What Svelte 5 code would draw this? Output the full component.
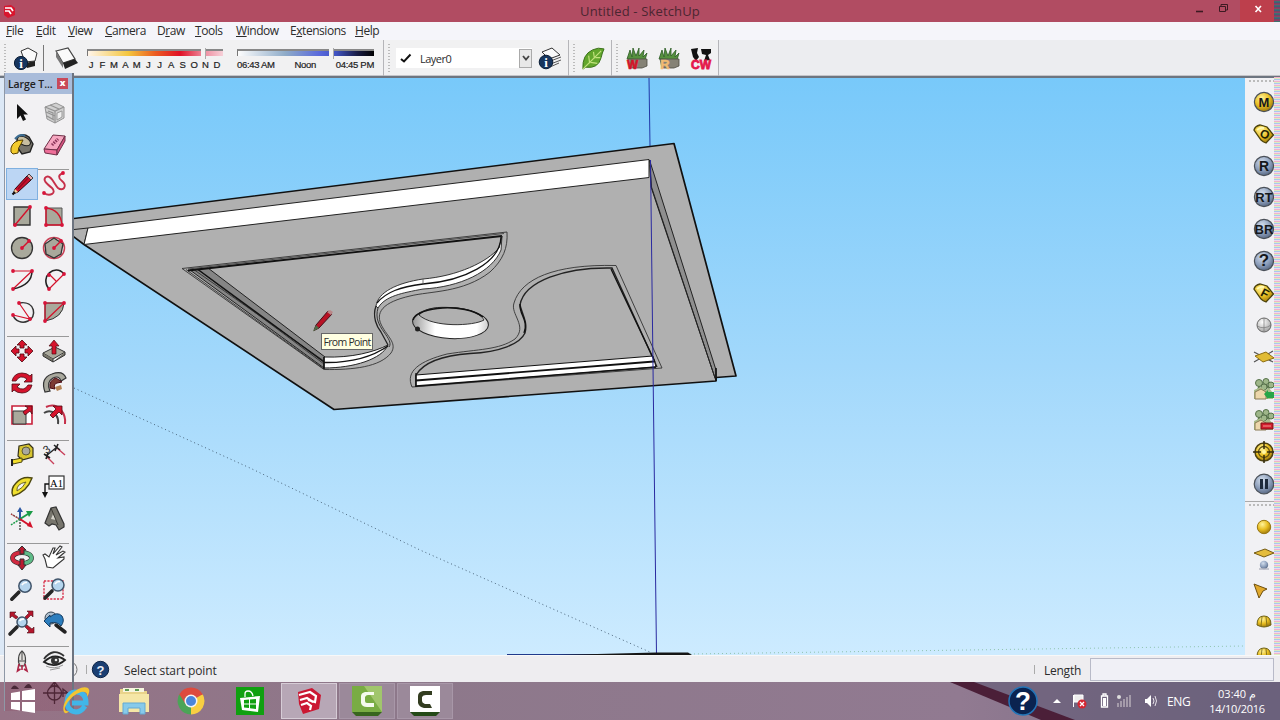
<script>
    const menus = ['File', 'Edit', 'View', 'Camera', 'Draw', 'Tools', 'Window', 'Extensions', 'Help'];
    const accel = { Draw: 1, Extensions: 1 };
    const months = 'JFMAMJJASOND'.split('');

    const toolGroups = [
        ['select', 'component', 'paint', 'eraser'],
        ['pencil', 'freehand', 'rect', 'rotrect', 'circle', 'polygon', 'arc', 'arc2', 'arc3', 'pie'],
        ['move', 'pushpull', 'rotate', 'follow', 'scale', 'offset'],
        ['tape', 'dimension', 'protractor', 'label', 'axes', 'text3d'],
        ['orbit', 'pan', 'zoom', 'zoomwin', 'extents', 'previous'],
        ['position', 'look']
    ];

    const renderTools = ['m', 'tagO', 'r', 'rt', 'br', 'help', 'tagF', 'sphere', 'plane', 'proxyIn', 'proxyOut', 'target', 'pause'];
    const lightTools = ['omni', 'rectLight', 'spot', 'dome', 'dome'];

    const red = '#d3122b';
    const dot = (x, y) => `<circle cx="${x}" cy="${y}" r="1.9" fill="#d8143a"/>`;
    const ball = (fill, label, size = 13) =>
        `<circle cx="11" cy="11" r="9.6" fill="url(#${fill})" stroke="#4a5058" stroke-width="1.2"/>
         <text x="11" y="15.6" font-size="${size}" text-anchor="middle" font-weight="bold" fill="#15181c" font-family="Liberation Sans">${label}</text>`;
    const tag = (label) =>
        `<path d="M1 7Q2 3 7 2L14 4L20.500 12L13 20Q10 19 8 17Z" fill="url(#gold)" stroke="#4c430c" stroke-width="1.3"/>
         <path d="M4 7Q7 4 11 5" stroke="#fff8b0" stroke-width="2" fill="none"/>
         <text x="12" y="15.5" font-size="12" text-anchor="middle" font-weight="bold" fill="#241f05" transform="rotate(28 12 11)" font-family="Liberation Sans">${label}</text>`;
    const trees = `<path d="M5 12L7 6M12 9L14 3M16 11L12 5" stroke="#627b50" stroke-width="2"/>
        <g fill="#9fb78a" stroke="#56724a"><circle cx="6" cy="5" r="3.5"/><circle cx="13" cy="3.5" r="3"/><circle cx="18" cy="7" r="3"/><circle cx="11" cy="9" r="3"/></g>
        <path d="M1 12V21H20V15L16 10L12 12L8 9Z" fill="#a9bd8c"/>
        <path d="M2 21V14L8 11L13 14V21Z" fill="#ecd7ab" stroke="#8a7a55"/>`;
    const lens = (x, y, r) =>
        `<path d="M${x - r} ${y + r}L${x - r - 7} ${y + r + 7}" stroke="#262626" stroke-width="3.6" stroke-linecap="round"/>
         <circle cx="${x}" cy="${y}" r="${r}" fill="#b5d5ee" stroke="#40546a" stroke-width="1.5"/>
         <path d="M${x - r / 2} ${y - 1}Q${x - 1} ${y - r / 1.5} ${x + 2} ${y - r / 1.8}" stroke="#fff" stroke-width="1.6" fill="none"/>`;
    const grass = `<path d="M2 12L5 3L7 10L8 1L11 9L14 1L14 9L19 3L18 10L22 6L20 13Z" fill="#56913e" stroke="#2b5a23" stroke-width=".8"/>
        <path d="M3 12H22V19L17 21H5Z" fill="#858276" stroke="#4d4b42" stroke-width=".8"/>`;

    const icons = {
        select: '<path d="M8 4V19L11.5 15.5L14 21L17 19.5L14.5 14.5H19Z" fill="#111"/>',
        component: '<path d="M4 7L15 3L23 7V18L14 23L6 19Z" fill="#d0d0d0" stroke="#949494"/><path d="M4 7L14 11L23 7M14 11V23M7 11L12 13V20M9 5L18 9M5 12L14 16M6 16L13 20" fill="none" stroke="#939393" stroke-width="1.2"/><path d="M16 13L21 11V17L16 20Z" fill="#eee" stroke="#999"/>',
        paint: '<path d="M8 6Q13 0 20 5L24 12L21 20L13 22L8 15Z" fill="#77746b" stroke="#222" stroke-width="1.4"/><ellipse cx="15" cy="9" rx="7" ry="4" fill="#c8bea0" stroke="#222" transform="rotate(28 15 9)"/><path d="M2 16Q4 8 14 8L12 12Q9 15 9 21L4 22Q1 21 2 16Z" fill="#f2ca2c" stroke="#574100"/><path d="M6 7Q11 1 16 4" fill="none" stroke="#3d6d92" stroke-width="2"/>',
        eraser: '<path d="M12 3L24 4L16 18L3 17Z" fill="#f6a7c0" stroke="#6f3148"/><path d="M3 17L16 18V23L4 21Z" fill="#ee6e99" stroke="#6f3148"/><path d="M16 18L24 4V9L16 23Z" fill="#d4507e" stroke="#6f3148"/><path d="M11 13L17 7" stroke="#8b3559" stroke-width="3" stroke-dasharray="1.5 1"/>',
        pencil: '<path d="M4 23L6 18L18 5L22 9L9 21Z" fill="#c8102e" stroke="#35070f"/><path d="M4 23L6 18L9 21Z" fill="#f3d39a"/><path d="M3.500 23.500L6 21" stroke="#111" stroke-width="2.2"/><path d="M18 5L20 3L24 7L22 9Z" fill="#ecaaa7" stroke="#444"/><path d="M9 18L19 7" stroke="#94091f" stroke-width="1.2"/>',
        freehand: `<path d="M3 22C9 26 16 22 11 17C6 13 1 9 5 6C10 3 13 13 17 17C22 21 27 15 21 10C17 7 17 4 22 2" fill="none" stroke="#c6304a" stroke-width="1.9"/>${dot(3, 22)}${dot(22, 2)}`,
        rect: `<path d="M5 4H21V22H5Z" fill="#a9a99c" stroke="#333" stroke-width="1.4"/><path d="M6 22L21 4" stroke="${red}" stroke-width="1.4"/>${dot(6, 22)}${dot(21, 4)}`,
        rotrect: `<path d="M5 5H21V22H5Z" fill="#a9a99c" stroke="#555"/><path d="M5 22V5M5 22H21M5 5C14 6 20 12 21 22" stroke="${red}" stroke-width="1.4" fill="none"/>${dot(5, 22)}${dot(5, 5)}${dot(21, 22)}`,
        circle: `<circle cx="13" cy="13" r="10.5" fill="#a9a99c" stroke="#333" stroke-width="1.3"/><path d="M13 13L20 6" stroke="${red}" stroke-width="1.5"/>${dot(13, 13)}${dot(20, 6)}`,
        polygon: `<circle cx="13" cy="13" r="10.5" fill="#eee" stroke="#c94055" stroke-width="1.5"/><path d="M13 3L22 9L20 19L13 23L5 19L4 9Z" fill="#a9a99c" stroke="#333" stroke-width="1.3"/><path d="M13 13L20 6" stroke="${red}" stroke-width="1.5"/>${dot(13, 13)}${dot(20, 6)}`,
        arc: `<path d="M4 4H23L4 22" fill="none" stroke="${red}" stroke-width="1.2"/><path d="M23 4Q23 18 4 22" fill="none" stroke="#222" stroke-width="1.5"/>${dot(4, 4)}${dot(23, 4)}${dot(4, 22)}`,
        arc2: `<path d="M8 22C-2 10 14-4 23 7" fill="none" stroke="#222" stroke-width="1.6"/><path d="M8 22L23 7M8 7L15 14" fill="none" stroke="${red}" stroke-width="1.2"/>${dot(8, 22)}${dot(23, 7)}${dot(8, 8)}`,
        arc3: `<path d="M10 4C27 1 28 19 19 22C13 25 6 22 4 16" fill="none" stroke="#333" stroke-width="1.5"/><path d="M10 4L21 20L4 16" fill="none" stroke="${red}" stroke-width="1.2"/>${dot(10, 4)}${dot(21, 20)}${dot(4, 16)}`,
        pie: `<path d="M4 4H23Q22 19 4 22Z" fill="#a9a99c" stroke="#333"/><path d="M4 4H23L4 22Z" fill="none" stroke="${red}" stroke-width="1.2"/>${dot(4, 4)}${dot(23, 4)}${dot(4, 22)}`,
        move: '<path d="M13 2L18 7H15V10H11V7H8ZM13 24L18 19H15V16H11V19H8ZM2 13L7 8V11H10V15H7V18ZM24 13L19 8V11H16V15H19V18Z" fill="#d5132c" stroke="#4c0b13" stroke-width=".8"/>',
        pushpull: '<path d="M2 15L14 9L24 14L12 21Z" fill="#aaa99c" stroke="#333"/><path d="M2 15V18L12 24V21M12 24L24 17V14" fill="#777568" stroke="#333"/><path d="M13 2L18 8H15V16H11V8H8Z" fill="#d5132c" stroke="#4c0b13" stroke-width=".7"/>',
        rotate: '<path d="M3 11Q5 3 13 3Q18 3 21 6L23 4V12H15L18 9Q11 4 7 11Z" fill="#d5132c" stroke="#4c0b13" stroke-width=".8"/><path d="M23 15Q21 23 13 23Q8 23 5 20L3 22V14H11L8 17Q15 22 19 15Z" fill="#d5132c" stroke="#4c0b13" stroke-width=".8"/>',
        follow: '<path d="M4 22Q-1 8 11 4Q22 0 25 8L20 11Q18 5 12 8Q5 12 9 21Z" fill="#aaa99e" stroke="#333" stroke-width="1.2"/><path d="M9 18Q8 10 15 8L21 12L16 13Q12 14 14 19Z" fill="#7c3a34" stroke="#4c0b13"/><path d="M14 17L20 15L21 19L16 21Z" fill="#b58255"/>',
        scale: '<path d="M3 4H23V22H3Z" fill="#fff" stroke="#c8203a" stroke-width="1.6"/><path d="M4 9H17V22H4Z" fill="#aaa99c" stroke="#333"/><path d="M14 10L19 6L16 4H23V12L21 9L16 13Z" fill="#d5132c" stroke="#4c0b13" stroke-width=".8"/>',
        offset: '<path d="M5 5Q14 1 20 8Q25 14 24 22" fill="none" stroke="#c6304a" stroke-width="2"/><path d="M3 11Q9 7 14 12Q18 16 17 22" fill="none" stroke="#444" stroke-width="2"/><path d="M9 13L15 7L12 4H21V13L18 10L12 16Z" fill="#d5132c" stroke="#4c0b13" stroke-width=".8"/>',
        tape: '<path d="M10 4L20 2L24 6V15L13 18L9 14Z" fill="#d7c431" stroke="#33301a" stroke-width="1.2"/><circle cx="17" cy="9" r="4" fill="#a8a8a0" stroke="#605d32"/><path d="M3 18L13 16V20L4 22Z" fill="#f3df2d" stroke="#4e4811"/><path d="M3 17V24" stroke="#222" stroke-width="2"/>',
        dimension: '<path d="M5 14L16 5" stroke="#222" stroke-width="1.3"/><path d="M6 15L13 22M16 6L24 13" stroke="#c8405a" stroke-width="1.4"/><path d="M3 12L9 16M7 11L5 17M13 3L19 8M17 2L14 9" stroke="#222" stroke-width="1.6"/><text x="3" y="11" font-size="11" fill="#222" transform="rotate(-35 6 8)" font-family="Liberation Sans">3</text>',
        protractor: '<path d="M4 22Q1 15 7 9Q13 2 23 4Q18 18 4 22Z" fill="#efdf2e" stroke="#4c4710" stroke-width="1.4"/><path d="M8 17Q7 10 17 8Q14 14 8 17Z" fill="#f3f2ee" stroke="#6d681e"/>',
        label: '<rect x="8" y="2" width="15" height="13" fill="#fff" stroke="#333" stroke-width="1.2"/><text x="15.5" y="12.5" text-anchor="middle" font-size="10.500" font-family="Liberation Serif">A1</text><path d="M8 10H4V19" fill="none" stroke="#111" stroke-width="1.4"/><path d="M1 18H7L4 24Z" fill="#111"/>',
        axes: '<path d="M11 13V24M11 13L2 8" stroke="#555" stroke-width="1.5" stroke-dasharray="2 1"/><path d="M11 13L2 19" stroke="#1b9b47" stroke-width="1.500" stroke-dasharray="2 1"/><path d="M11 13V5" stroke="#2a57a3" stroke-width="2"/><path d="M8 6L11 1L14 6Z" fill="#2a57a3"/><path d="M11 13L19 8" stroke="#1b9b47" stroke-width="2"/><path d="M17 5L24 5L20 11Z" fill="#1b9b47"/><path d="M11 13L20 19" stroke="#d3122b" stroke-width="2"/><path d="M18 20L24 22L21 15Z" fill="#d3122b"/><path d="M2 8L10 13" stroke="#c33" stroke-dasharray="2 1"/>',
        text3d: '<path d="M4 17L10 2L15 1L23 18V21L18 24L15 19L11 18L8 20Z" fill="#77756d" stroke="#333" stroke-width="1.2"/><path d="M12 8L15 14L10 13Z" fill="#d4d2ca"/><path d="M10 2L17 19" stroke="#3b3a35"/>',
        orbit: '<ellipse cx="13" cy="13" rx="9.500" ry="5.500" fill="none" stroke="#333" stroke-width="4.800"/><path d="M13 7.500Q3.500 8 3.500 13Q4 18 13 18.500" fill="none" stroke="#d12a40" stroke-width="3.600"/><path d="M13 7.500Q22.500 8 22.500 13Q22 18 13 18.500" fill="none" stroke="#5fbb88" stroke-width="3.600"/><path d="M9 5L13 1L17 5H15V9H11V5ZM11 14H15V20H17L13 25L9 20H11Z" fill="#b91b30" stroke="#333"/>',
        pan: '<path d="M6 22L4 14L2 10L4 9L8 12L12 3L14 3L12 9L19 1L21 2L15 10L22 6L24 7L17 13L23 12V14L18 18L12 23Z" fill="#fff" stroke="#333" stroke-width="1.1"/>',
        zoom: lens(16, 9, 6.2),
        zoomwin: `<path d="M3 4H22V22H3Z" fill="none" stroke="#d8304a" stroke-width="1.4" stroke-dasharray="2.2 1.2"/>${lens(17, 8, 6)}`,
        extents: `${lens(13, 13, 5)}<path d="M1 3H7L5 5L9 8L7 10L3 7L1 9ZM24 2V8L22 6L18 10L16 8L20 4L18 2ZM25 24H18L20 22L16 18L18 16L23 20L25 18Z" fill="#b5162c" stroke="#4b0d17" stroke-width=".6"/>`,
        previous: '<circle cx="10" cy="9" r="6" fill="#aebfce" stroke="#35434f"/><path d="M15 16L24 23" stroke="#222" stroke-width="3.5" stroke-linecap="round"/><path d="M3 12L9 6V8Q16 2 21 7Q24 12 20 17Q16 12 9 14V18Z" fill="#2c7dbd" stroke="#163d63"/>',
        position: '<path d="M9.500 14Q9 6 13 3Q17 6 16.500 14L15 18H11Z" fill="#e4e2df" stroke="#444" stroke-width="1.2"/><path d="M10 13H16M13 4V12" stroke="#444"/><path d="M10 16L8.500 23L11.500 21M16 16L18 23L15 21M13 17V22" fill="none" stroke="#ae2546" stroke-width="1.6"/>',
        look: '<path d="M3 11Q12-1 23 8" fill="none" stroke="#333" stroke-width="1.8"/><path d="M3 14Q13 4 24 12Q14 21 3 14Z" fill="#eee" stroke="#222" stroke-width="1.8"/><circle cx="14" cy="12.500" r="4" fill="#333"/><circle cx="15" cy="12" r="1.3" fill="#eee"/><path d="M5 18Q13 22 22 17M9 22L19 20" stroke="#999" fill="none"/>',

        m: ball('gold', 'M'),
        tagO: tag('O'),
        r: ball('steel', 'R', 14),
        rt: ball('steel', 'RT'),
        br: ball('steel', 'BR'),
        help: ball('steel', '?', 17),
        tagF: tag('F'),
        sphere: '<circle cx="11" cy="11" r="7" fill="url(#silver)" stroke="#666"/><path d="M4 12Q11 16 18 11M11 4V17" stroke="#777" stroke-width=".7" fill="none"/>',
        plane: '<path d="M1 6L20 16M20 5L1 16" stroke="#555" stroke-width="1.2"/><path d="M2 10L13 6L21 12L10 16Z" fill="#e1bb35" stroke="#8c6d13"/>',
        proxyIn: `${trees}<path d="M11 16L15 12V14H21V20H15V21Z" fill="#26a548"/>`,
        proxyOut: `${trees}<path d="M8 14H20V20H8Z" fill="#d21e2d" stroke="#7e1119"/><path d="M10 17H18" stroke="#f29b94"/>`,
        target: '<circle cx="11" cy="11" r="9" fill="url(#gold)" stroke="#4f4210" stroke-width="1.5"/><circle cx="11" cy="11" r="5.5" fill="none" stroke="#5e4d10" stroke-width="1.3"/><path d="M11 0V8M11 14V22M0 11H8M14 11H22" stroke="#332b0c" stroke-width="1.5"/><circle cx="11" cy="11" r="2" fill="#fff7a5"/>',
        pause: '<circle cx="11" cy="11" r="9.8" fill="url(#steel)" stroke="#4a5058" stroke-width="1.2"/><path d="M8.5 6V16M13.5 6V16" stroke="#1d2a3c" stroke-width="3"/>',
        omni: '<circle cx="11" cy="11" r="6.7" fill="url(#gold)" stroke="#987713"/>',
        rectLight: '<path d="M1 5L12 1L21 5L11 9Z" fill="#e4bc3c" stroke="#755b13"/><circle cx="11" cy="17" r="4.2" fill="url(#steel)"/><path d="M6 21H16" stroke="#b7b9c5" stroke-width="1.5"/>',
        spot: '<path d="M1 4L14 9L10 11L6 18Z" fill="#e1a92c" stroke="#6e5010"/>',
        dome: '<path d="M4 14Q4 5 11 5Q18 5 18 14Q11 18 4 14Z" fill="url(#gold)" stroke="#6e6115"/><path d="M9 6L8 15M13 6L14 15" stroke="#6e6115" stroke-width=".8"/>',

        shadowInfo: '<path d="M8 4L15 1L24 6L22 14L12 15Z" fill="#fafafa" stroke="#333"/><path d="M12 16L22 14V19L14 21Z" fill="#222"/><circle cx="8" cy="16" r="6.6" fill="#16355e" stroke="#0b1d35"/><text x="8" y="20.5" text-anchor="middle" font-family="Liberation Serif" font-weight="bold" font-size="13" fill="#fff">i</text>',
        shadow: '<path d="M2 4L14 1L21 12L9 16Z" fill="#fafafa" stroke="#444" stroke-width="1.2"/><path d="M2 4L9 16V21L2 10Z" fill="#777"/><path d="M9 16L21 12L24 16L11 22Z" fill="#222"/>',
        layers: '<path d="M4 5L14 1L22 8L11 12Z" fill="#fafafa" stroke="#333"/><path d="M10 15L23 10M10 18L23 13M12 20L21 16" stroke="#555"/><circle cx="8" cy="15" r="6.8" fill="#16355e" stroke="#0b1d35"/><text x="8" y="19.5" text-anchor="middle" font-family="Liberation Serif" font-weight="bold" font-size="13" fill="#fff">i</text>',
        leaf: '<path d="M2 23Q1 8 12 3Q18 0 24 2Q22 6 21 11Q18 23 5 21Z" fill="#62a62c" stroke="#386f18"/><path d="M2 23Q11 14 21 4M9 17L8 9M14 12L13 5M10 16L17 17M15 11L20 11" fill="none" stroke="#c2e27d" stroke-width="1.2"/>',
        grassW: `${grass}<text x="7.500" y="22" text-anchor="middle" font-size="13" textLength="11" lengthAdjust="spacingAndGlyphs" font-weight="bold" fill="#d41429" stroke="#d41429" stroke-width=".7" font-family="Liberation Sans">W</text>`,
        grassR: `${grass}<text x="8" y="22" text-anchor="middle" font-size="13" font-weight="bold" fill="#f1bb72" stroke="#f1bb72" stroke-width=".5" font-family="Liberation Sans">R</text>`,
        cw: '<path d="M2 2L9 1L8 6L10 10L7 14L4 10ZM12 2H22V6L19 8L21 13L15 14L17 8L13 7Z" fill="#111"/><text x="12" y="22" text-anchor="middle" font-size="12" font-weight="bold" fill="#e4184b" stroke="#e4184b" stroke-width=".8" font-family="Liberation Sans">CW</text>'
    };
</script>

{#snippet icon(name, size, box)}
    <svg class="icon" width={size} height={size} viewBox="0 0 {box} {box}">{@html icons[name]}</svg>
{/snippet}

<svg class="defs" width="0" height="0">
    <defs>
        <radialGradient id="gold" cx=".38" cy=".3" r=".8"><stop stop-color="#fff39a" /><stop offset=".5" stop-color="#e8bd20" /><stop offset="1" stop-color="#8c6a0c" /></radialGradient>
        <radialGradient id="steel" cx=".4" cy=".3" r=".8"><stop stop-color="#d3deed" /><stop offset=".55" stop-color="#8a9cb9" /><stop offset="1" stop-color="#4a5973" /></radialGradient>
        <radialGradient id="silver" cx=".4" cy=".3" r=".8"><stop stop-color="#fff" /><stop offset="1" stop-color="#999" /></radialGradient>
    </defs>
</svg>

<div class="window">
    <header class="titlebar">
        <svg class="app-icon" width="13" height="13" viewBox="0 0 13 13">
            <path d="M1 1L8 0L12 3V10L5 13L1 10Z" fill="#d9152e" />
            <path d="M2 3H8L10 6M2 6H6L8 9" fill="none" stroke="#fff" stroke-width="1.7" />
        </svg>
        <span class="title">Untitled - SketchUp</span>
        <svg class="controls" width="81" height="22" viewBox="0 0 81 22">
            <path d="M-3 11.5H4" stroke="#3c1a22" stroke-width="1.6" />
            <path d="M20.5 6.5H26.5V11.5H20.5ZM22 6V4.500H28.5V10H27" fill="none" stroke="#3c1a22" />
            <rect x="41" width="40" height="22" fill="#bd3f4c" />
            <path d="M56.500 6L62 12M62 6L56.500 12" stroke="#fff" stroke-width="1.6" />
        </svg>
    </header>

    <nav class="menubar">
        {#each menus as item}
            {@const i = accel[item] ?? 0}
            <span>{item.slice(0, i)}<u>{item[i]}</u>{item.slice(i + 1)}</span>
        {/each}
    </nav>

    <div class="toolbar">
        <i class="grip"></i>
        <div class="slot info">{@render icon('shadowInfo', 24, 24)}</div>
        <i class="divider short"></i>
        <div class="slot shadow">{@render icon('shadow', 24, 24)}</div>
        <div class="slider date">
            <div class="track"><b></b></div>
            <div class="months">{#each months as m}<span>{m}</span>{/each}</div>
        </div>
        <div class="slider time">
            <div class="track"><b></b></div>
            <div class="hours"><span>06:43 AM</span><span>Noon</span><span>04:45 PM</span></div>
        </div>
        <i class="divider"></i>
        <i class="grip"></i>
        <div class="combo">
            <svg width="12" height="10" viewBox="0 0 12 10"><path d="M1 6L4 8.5L10.500 1.500" fill="none" stroke="#111" stroke-width="2" /></svg>
            <span>Layer0</span>
            <button aria-label="Layers"><svg width="8" height="6" viewBox="0 0 8 6"><path d="M1 1L4 4.500L7 1" fill="none" stroke="#444" stroke-width="1.800" /></svg></button>
        </div>
        <div class="slot layer">{@render icon('layers', 24, 24)}</div>
        <i class="divider"></i>
        <i class="grip"></i>
        <div class="slot leaf">{@render icon('leaf', 24, 25)}</div>
        <i class="divider"></i>
        <i class="grip"></i>
        <div class="plants">
            {@render icon('grassW', 24, 24)}
            {@render icon('grassR', 24, 24)}
            {@render icon('cw', 24, 24)}
        </div>
        <i class="divider"></i>
    </div>

    <main>
        <div class="gutter"></div>
        <svg class="scene" width="1171" height="577" viewBox="74 78 1171 577">
            <defs>
                <linearGradient id="sky" x2="0" y2="1"><stop stop-color="#78c9fa" /><stop offset=".5" stop-color="#a2d8fb" /><stop offset="1" stop-color="#cdebff" /></linearGradient>
                <linearGradient id="rim"><stop stop-color="#999" /><stop offset=".3" stop-color="#fff" /><stop offset=".85" stop-color="#fff" /><stop offset="1" stop-color="#ccc" /></linearGradient>
            </defs>
            <rect x="74" y="78" width="1171" height="577" fill="url(#sky)" />
            <path d="M74 388L250 468L420 550L652 653" fill="none" stroke="#3d566c" stroke-width=".9" stroke-dasharray="1 3" />
            <path d="M690 654L1245 646" stroke="#8fc3ae" stroke-dasharray="1 3" />
            <path d="M649 78L650 146" stroke="#2038a8" />

            <!-- slab -->
            <path d="M70 219L674 143.500L736 376L716 377.500V381L334 409.500L84 244.500L70 234Z" fill="#b0b0b0" stroke="#101010" stroke-width="1.700" stroke-linejoin="round" />
            <path d="M74 229.500L88 228L84 244.500" fill="none" stroke="#222" />
            <path d="M88 228L649 159.500V177.500L84 244.500Z" fill="#fff" stroke="#222" />
            <path d="M649.500 160L716 370V381L651.500 187Z" fill="#8e8e8e" stroke="#222" />
            <path d="M650 165L651 187L715 378" fill="none" stroke="#222" />
            <path d="M716 368V381" stroke="#111" stroke-width="1.600" />

            <!-- left recess -->
            <path d="M182 268.500L507 232C508 248 503 260 490 272C463 293 430 291 410 296C384 302 373 312 383 328C389 338 397 344 391 353C380 367 353 370 324 369.500Z" fill="#b0b0b0" stroke="#333" stroke-width=".9" />
            <path d="M190 270L208 268L325 357L324 368Z" fill="#858585" stroke="#222" />
            <path d="M186 269.500L324 369M193 269L324 361M197 269L324 364" fill="none" stroke="#333" stroke-width=".9" />
            <path d="M198 269.500L324 362" stroke="#111" stroke-width="1.300" />
            <path d="M188 270.500L502 236" stroke="#111" stroke-width="1.800" />
            <path d="M188 269L504 233.500" stroke="#333" stroke-width=".8" />
            <path d="M499 248C487 262 458 276 423 279C397 283 378 292 376 306L378 308C385 296 402 293 423 289C460 287 492 272 501 250L502 236Z" fill="#fff" stroke="#222" stroke-width=".9" />
            <path d="M501 237C500 263 464 281 423 284C400 287 386 292 377 303" fill="none" stroke="#111" stroke-width="1.300" />
            <path d="M423 279V284" stroke="#555" stroke-width=".8" />
            <path d="M376 306C372 317 377 327 381 332L388 345" fill="none" stroke="#222" stroke-width="1.300" />
            <path d="M378 308C375 318 379 325 384 332C388 338 392 343 389 347" fill="none" stroke="#333" />
            <path d="M324 357C352 358 374 352 388 345C382 359 354 368 324 368Z" fill="#fff" stroke="#222" />
            <path d="M324 362.500C350 363 372 357 388 346M324 357V369" fill="none" stroke="#111" stroke-width="1.500" />

            <!-- right recess -->
            <path d="M412 387C405 371 420 361 447 354C479 349 499 350 515 339C528 326 510 314 514 303C521 279 554 264 616 265.500L662 368Z" fill="#b0b0b0" stroke="#333" stroke-width=".9" />
            <path d="M416 387V375C425 360 449 355 470 353.500C500 352 520 344 525 333C528 322 522 314 520 305C524 281 565 267 612 268L657 367" fill="#b0b0b0" stroke="#222" stroke-width="1.400" />
            <path d="M520 304C519 315 529 320 524 333" fill="none" stroke="#111" stroke-width="1.400" />
            <path d="M416 375L653 356L656 367L416 386.500Z" fill="#fff" stroke="#111" />
            <path d="M416 380.500L654 361.500" stroke="#111" stroke-width="1.800" />
            <path d="M416 386L656 367M416 373V387M611 269L655 362" stroke="#111" stroke-width="1.300" />

            <!-- round opening -->
            <ellipse cx="450.500" cy="323" rx="38" ry="15.500" transform="rotate(3 450 323)" fill="url(#rim)" stroke="#222" />
            <path d="M419 315C426 307 440 307 450 307.500C469 308 481 314 484 320C474 326 433 328 419 315Z" fill="#b0b0b0" stroke="#222" stroke-width=".9" />
            <path d="M413 320C418 306 464 303 483 317" fill="none" stroke="#111" stroke-width="1.500" />
            <circle cx="417.500" cy="329" r="2.500" fill="#222" />

            <path d="M650.500 160L656.500 655" stroke="#2a2aa0" />
            <path d="M507 654.500H656" stroke="#203a8c" />
            <path d="M558 655L656 652.500H688L692 655Z" fill="#161616" />

            <!-- pencil cursor -->
            <path d="M314 330.500L316 325L328 311L332 314L319 328Z" fill="#b81225" stroke="#43101a" />
            <path d="M313 331.500L316 325L319 328Z" fill="#506b48" />
            <path d="M327 312L330 310L333 312L331 315Z" fill="#b98788" />
        </svg>
        <aside>
            <i class="dots"></i>
            {#each renderTools as name}<div>{@render icon(name, 22, 22)}</div>{/each}
            <i class="rule"></i>
            <i class="dots"></i>
            {#each lightTools as name}<div>{@render icon(name, 22, 22)}</div>{/each}
        </aside>
        <div class="tip">From Point</div>
    </main>

    <footer class="status">
        <svg width="48" height="20" viewBox="0 0 48 20">
            <circle cx="7" cy="9.500" r="8" fill="none" stroke="#777" />
            <path d="M24.500 5V14" stroke="#aaa" />
            <circle cx="38.500" cy="9.500" r="8.200" fill="#1b3f73" stroke="#0e2446" />
            <text x="38.500" y="14.500" text-anchor="middle" font-family="Liberation Sans" font-weight="bold" font-size="13" fill="#e8eef6">?</text>
        </svg>
        <span class="prompt">Select start point</span>
        <i></i>
        <span class="length">Length</span>
        <div class="vcb"></div>
    </footer>

    <div class="taskbar">
        <svg class="wallpaper" width="330" height="38" viewBox="0 0 330 38">
            <path d="M0 0H330V38H110Z" fill="#665c78" opacity=".65" />
            <path d="M0 0H24L125 38H91Z" fill="#4b1f38" />
        </svg>
        <div class="task start">
            <svg width="28" height="26" viewBox="0 0 28 26"><path d="M2 5L11 3.500V12H2ZM13 3L26 1V12H13ZM2 14H11V22.500L2 21ZM13 14H26V25L13 23Z" fill="#fff" /></svg>
        </div>
        <div class="task ie">
            <svg width="30" height="30" viewBox="0 0 30 30">
                <path d="M24 20Q20 26 15 26Q6 25 6 15.500Q7 6 15 6Q25 6 25 17H11" fill="none" stroke="#41b6e8" stroke-width="5" />
                <path d="M3 26Q0 19 9 9Q20-1 27 2Q30 5 26 11Q27 5 20 6Q10 9 4 21Q3 26 8 25Q5 29 3 26Z" fill="#f3c431" />
            </svg>
        </div>
        <div class="task">
            <svg width="32" height="28" viewBox="0 0 32 28">
                <path d="M2 2H12L14 4H29V25H2Z" fill="#e9d38a" /><path d="M5 1H26V5H5Z" fill="#f7f5df" />
                <path d="M7 3H11M17 3H21" stroke="#609c55" stroke-width="2" /><path d="M1 7H31V25H1Z" fill="#f5e6a6" />
                <path d="M5 16H27V27H22V21H10V27H5Z" fill="#87caea" stroke="#64a9d2" />
            </svg>
        </div>
        <div class="task">
            <svg width="28" height="28" viewBox="0 0 28 28">
                <path d="M14 14L2.300 7.300A13.500 13.500 0 0 1 25.700 7.300Z" fill="#dd4b3e" />
                <path d="M14 14L25.700 7.300A13.500 13.500 0 0 1 14 27.500Z" fill="#f8cf42" />
                <path d="M14 14V27.500A13.500 13.500 0 0 1 2.300 7.300Z" fill="#4ba457" />
                <path d="M14 8H26L25 7.300H14ZM8.500 17L2.300 7.300L5 6L11 17Z" fill="#dd4b3e" />
                <circle cx="14" cy="14" r="6.500" fill="#f4f4f4" /><circle cx="14" cy="14" r="5" fill="#4b86db" />
            </svg>
        </div>
        <div class="task">
            <svg width="28" height="28" viewBox="0 0 28 28">
                <rect width="28" height="28" fill="#10a010" /><path d="M9 10V7Q9 4 12 4Q16 4 17 9" fill="none" stroke="#fff" stroke-width="1.300" />
                <path d="M4 11L24 9L22 25L6 23Z" fill="#fff" /><path d="M8 13L13 12.500V16.500H8ZM14 12.400L20 12V16.500H14ZM8 17.500H13V21L8 20.500ZM14 17.500H20V22L14 21.300Z" fill="#10a010" />
            </svg>
        </div>
        <div class="task open active">
            <svg width="26" height="28" viewBox="0 0 26 28">
                <path d="M2 5L16 1L25 8L23 22L7 27L3 17Z" fill="#cb1732" />
                <path d="M3 8L14 5L20 9L19 15L12 13M4 13L11 11L17 15M5 18L11 16L15 19L14 23" fill="none" stroke="#fff" stroke-width="2.200" />
            </svg>
        </div>
        <div class="task open">
            <svg width="30" height="30" viewBox="0 0 30 30"><path d="M0 0H30V26H0Z" fill="#79ac43" /><path d="M12 0H30V26Z" fill="#a1c66c" /><path d="M0 26H30L26 30H4Z" fill="#38651e" /><path d="M22 6H13Q9 7 9 10V17Q10 21 15 21H22V17H15Q13 17 13 15V11Q14 9 16 9H22Z" fill="#f5faed" /></svg>
        </div>
        <div class="task open">
            <svg width="30" height="30" viewBox="0 0 30 30"><path d="M0 0H30V26H0Z" fill="#fff" /><path d="M0 26H30L26 30H4Z" fill="#244a17" /><path d="M22 5H13Q8 6 8 10V17Q9 21 14 22H22L20 18H15Q12 17 12 15V11Q13 9 16 9H22Z" fill="#333d20" /></svg>
        </div>
        <div class="tray">
            <svg width="130" height="32" viewBox="10 0 130 32">
                <circle cx="26" cy="16" r="14" fill="#0b2350" stroke="#2375b8" stroke-width="1.500" />
                <text x="26" y="25" text-anchor="middle" font-size="26" font-weight="bold" font-family="Liberation Sans" fill="#fff">?</text>
                <path d="M56 18L60 14L64 18Z" fill="#fff" />
                <path d="M76.500 10V22M77 10H86V17H77Z" stroke="#fff" fill="#eee" /><circle cx="85" cy="19" r="4.500" fill="#d52632" /><path d="M83 17L87 21M87 17L83 21" stroke="#fff" stroke-width="1.300" />
                <path d="M104.500 11H110.500V22H104.500ZM106 9H109V11H106Z" stroke="#fff" stroke-width="1.300" fill="none" /><path d="M106 13H109V21H106Z" fill="#fff" />
                <path d="M121 22V18M124 22V16M127 22V14M130 22V12M133 22V10" stroke="#aaa1af" stroke-width="1.800" /><circle cx="122" cy="12" r="2" fill="#ddd" />
            </svg>
            <svg class="speaker" width="16" height="16" viewBox="0 0 16 16"><path d="M1 6H3L7 2V14L3 10H1Z" fill="#fff" /><path d="M9 5Q11 8 9 11M11 3Q14 8 11 13" fill="none" stroke="#e6e0e8" /></svg>
            <span class="lang">ENG</span>
            <div class="clock"><span>03:40 م</span><span>14/10/2016</span></div>
        </div>
    </div>

    <section class="palette">
        <h2>Large T...<b>x</b></h2>
        {#each toolGroups as group}
            <div class="group">
                {#each group as name}
                    <div class="tool" class:picked={name === 'pencil'}>{@render icon(name, 26, 26)}</div>
                {/each}
            </div>
        {/each}
        <svg class="ghost" width="66" height="29" viewBox="0 0 66 29">
            <path d="M6 7Q9 0 14 7M19 6Q24-2 27 6" fill="#492837" />
            <path d="M38 11H63L58 7V15M49.500 0V22M49.500 0L46 4H53Z" fill="none" stroke="#4d2636" stroke-width="1.300" />
            <circle cx="49.500" cy="11" r="7" fill="none" stroke="#4d2636" stroke-width="1.300" />
        </svg>
    </section>
    <i class="noise top"></i>
    <i class="noise"></i>
</div>

<style>
    :global(body) {
        margin: 0;
        overflow: hidden;
        background: #eee;
    }

    .window {
        position: relative;
        width: 1280px;
        height: 720px;
        display: flex;
        flex-direction: column;
        overflow: hidden;
        font-family: "Open Sans", "Noto Sans", sans-serif;
        font-size: 12px;
        color: #2c2c2c;
        background: #f0f0f2;
    }
    .defs { position: absolute; }
    svg { display: block; flex: none; }
    .icon { overflow: visible; }

    .titlebar {
        height: 22px;
        flex: none;
        display: grid;
        grid-template-columns: 81px 1fr 81px;
        align-items: center;
        background: #b14c62;
    }
    .app-icon { margin-left: 3px; }
    .controls { overflow: visible; }
    .title {
        text-align: center;
        font-size: 13px;
        color: #4b2631;
        letter-spacing: .15px;
    }

    .menubar {
        height: 18px;
        flex: none;
        display: grid;
        grid-template-columns: 30px 32px 37px 52px 38px 41px 54px 65px 40px;
        padding-left: 6px;
        line-height: 18px;
        letter-spacing: -.45px;
        background: #f5f5fa;
    }
    u { text-underline-offset: 1px; }

    .toolbar {
        height: 36px;
        flex: none;
        display: flex;
        align-items: center;
        box-sizing: border-box;
        background: linear-gradient(90deg, #f1f1f2 719px, #ecedf0 719px);
        border-bottom: 1px solid #c4c4c8;
    }
    .grip {
        width: 2px;
        height: 28px;
        margin-left: 4px;
        flex: none;
        background: repeating-linear-gradient(#bbb 0 1px, transparent 1px 3px);
    }
    .divider { width: 1px; height: 36px; flex: none; background: #b5b5b9; }
    .divider.short { height: 26px; background: #777; }
    .slot { flex: none; display: flex; padding-top: 2px; }
    .info { width: 31px; margin-left: 7px; justify-content: flex-start; }
    .info + .divider { margin-left: -1px; }
    .shadow { width: 32px; margin-left: 10px; }
    .slider { flex: none; height: 22px; margin-top: 5px; font: 9.500px "Liberation Sans", sans-serif; color: #222; }
    .date { width: 136px; margin-left: 1px; }
    .time { width: 137px; margin: 5px 9px 0 14px; }
    .track { position: relative; height: 5px; border-top: 2px solid #888; border-left: 1px solid #777; }
    .date .track { background: linear-gradient(90deg, #fff5ea, #f4c53c 30%, #eb5b20 50%, #e01025 68%, #ec8296 84%, #f6d0d8); }
    .time .track { background: linear-gradient(90deg, #fdfdfd, #8eabc8 35%, #5969dc 60%, #4053c2 72%, #171b43 88%, #000); }
    .track b { position: absolute; top: -3px; width: 4px; height: 11px; background: #f3f3f3; border-right: 1px solid #aaa; }
    .date b { left: 113px; }
    .time b { left: 91px; }
    .months, .hours { display: flex; justify-content: space-between; padding: 3px 2px 0 0; line-height: 11px; -webkit-text-stroke: .2px #222; }
    .months span { width: 8px; text-align: center; }
    .hours { padding: 3px 0 0; letter-spacing: -.3px; }

    .combo {
        display: flex;
        align-items: center;
        width: 136px;
        height: 20px;
        margin-left: 6px;
        margin-top: 1px;
        flex: none;
        background: #fff;
        font-size: 11px;
        letter-spacing: -.5px;
    }
    .combo > svg { margin-left: 4px; }
    .combo span { margin-left: 8px; }
    .combo button { width: 13px; height: 19px; padding: 0; margin-left: auto; display: grid; place-items: center; border: 1px solid #aaa; background: #e8e8e8; }
    .layer { width: 30px; margin-left: 6px; }
    .leaf { width: 30px; margin-left: 6px; }
    .plants { display: flex; gap: 8px; margin: 2px 5px 0 7px; }

    main {
        position: relative;
        height: 579px;
        flex: none;
        display: flex;
        box-sizing: border-box;
        border-top: 2px solid #6d7580;
    }
    .gutter { width: 74px; background: #dce8f6; }
    aside {
        width: 35px;
        overflow: hidden;
        display: flex;
        flex-direction: column;
        background: #f1f1f4;
    }
    aside div { height: 31.850px; flex: none; display: grid; place-items: center; margin-left: 3px; }
    .dots { height: 2px; flex: none; margin: 2px 4px 4px; background: repeating-linear-gradient(90deg, #bbb 0 2px, transparent 2px 4px); }
    .rule { height: 1px; flex: none; background: #aaa; margin-top: 1px; }
    .rule + .dots { margin-bottom: 5px; }

    .tip {
        position: absolute;
        left: 321px;
        top: 255px;
        width: 50px;
        height: 15px;
        border: 1px solid #666;
        background: #ffffe1;
        font-size: 10.500px;
        line-height: 16px;
        text-align: center;
        letter-spacing: -.7px;
        white-space: nowrap;
    }

    .status {
        height: 27px;
        flex: none;
        display: flex;
        align-items: center;
        padding-left: 62px;
        box-sizing: border-box;
        border-top: 1px solid #f8f8f8;
        background: #eeedf0;
    }
    .status > svg { margin-top: 2px; }
    .prompt { margin-left: 14px; margin-top: 2px; width: 910px; letter-spacing: -.1px; }
    .status i { width: 1px; height: 9px; background: #aaa; }
    .length { margin-left: 9px; margin-top: 2px; width: 46px; letter-spacing: -.25px; }
    .vcb { height: 21px; flex: 1; margin-right: 6px; border: 1px solid #b8bac8; background: #f0f0f6; }

    .taskbar {
        position: relative;
        height: 38px;
        flex: none;
        display: flex;
        align-items: center;
        background: linear-gradient(90deg, #967386, #8d788a 30%, #917a91 75%, #756b83);
    }
    .wallpaper { position: absolute; right: 0; top: 0; }
    .task { position: relative; z-index: 1; width: 58px; height: 36px; display: grid; place-items: center; flex: none; }
    .start { width: 46px; }
    .ie { width: 60px; }
    .task.open { width: 56px; margin-right: 2px; border: 1px solid #a897a8; box-sizing: border-box; background: #9b899a; }
    .task.open.active { background: #b7a7b6; border-color: #d6ccd6; }
    .ie + .task { width: 56px; }
    .task:has(+ .active) { width: 60px; margin-right: 1px; }
    .tray { position: relative; display: flex; align-items: center; margin-left: auto; color: #fff; }
    .speaker { margin-left: 7px; }
    .lang { margin-left: 13px; width: 35px; letter-spacing: -.3px; }
    .tray .lang { margin-left: 7px; margin-right: 0; padding-left: 0; }
    .clock { width: 70px; display: flex; flex-direction: column; align-items: center; margin-right: 8px; font-size: 11px; line-height: 15px; letter-spacing: -.3px; }

    .palette {
        position: absolute;
        left: 4px;
        top: 73px;
        width: 70px;
        height: 638px;
        box-sizing: border-box;
        border-left: 1px solid #8f98a6;
        border-right: 2px solid #6d7480;
        background: linear-gradient(#f2f1f3 609px, rgba(143, 90, 112, .45) 609px);
    }
    h2 {
        display: flex;
        justify-content: space-between;
        align-items: center;
        height: 21px;
        margin: 0 0 3px;
        padding: 0 4px 0 3px;
        font-size: 10.500px;
        font-weight: 600;
        letter-spacing: -.1px;
        color: #222;
        background: #a9bcda;
    }
    h2 b { width: 11px; height: 11px; line-height: 9px; font-size: 9px; text-align: center; color: #fff; background: #c84a5a; }
    .group { display: grid; grid-template-columns: 32px 32px; padding-left: 1px; }
    .group + .group { margin-top: 7.200px; background: linear-gradient(#999, #999) 2px 1px / 62px 1px no-repeat; }
    .tool { height: 32px; display: grid; place-items: center; }
    .picked { background: #bcd6f4; box-shadow: inset 0 0 0 1px #7fb0e0; }
    .ghost { position: absolute; left: 0; top: 609px; }

    .noise {
        position: absolute;
        right: 0;
        top: 77px;
        width: 6px;
        height: 578px;
        background: repeating-linear-gradient(#f2b3cb 0 1px, #dcedc0 1px 2px, #a9c8ee 2px 3px, #ecdaf0 3px 4px);
    }
    .noise.top {
        top: 0;
        height: 22px;
        background: repeating-linear-gradient(#8c3f6b 0 1px, #40716b 1px 2px, #3d5f7c 2px 3px, #76475f 3px 4px);
    }
</style>
